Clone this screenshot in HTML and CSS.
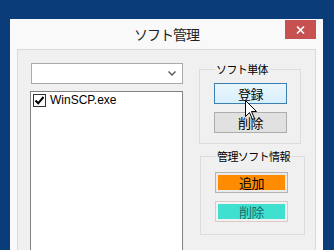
FILE: index.html
```html
<!DOCTYPE html>
<html lang="ja">

<head>
  <meta charset="UTF-8">
  <meta name="viewport" content="width=device-width, initial-scale=1.0">
  <title>ソフト管理</title>
  <link rel="stylesheet" href="styles.css">
</head>

<body>
  <div class="window">
    <!-- タイトルバー -->
    <div class="titlebar">
      <span></span>
      <span class="title">ソフト管理</span>
      <span class="close">
        <svg width="9" height="8" viewBox="0 0 9 8">
          <path d="M1 0.5 L8 7.5 M8 0.5 L1 7.5" stroke="#fff" stroke-width="1.6" fill="none" />
        </svg>
      </span>
    </div>

    <div class="client">
      <div class="left">
        <div class="combo">
          <svg width="8" height="5" viewBox="0 0 8 5">
            <path d="M0.5 0.5 L4 4 L7.5 0.5" stroke="#606060" stroke-width="1.5" fill="none" />
          </svg>
        </div>
        <div class="listbox">
          <div class="item">
            <span class="check">
              <svg width="11" height="11" viewBox="0 0 11 11">
                <path d="M1.5 5.5 L4.2 8.3 L9.5 2" stroke="#000" stroke-width="2" fill="none" />
              </svg>
            </span>
            WinSCP.exe
          </div>
        </div>
      </div>

      <div class="right">
        <fieldset class="group">
          <legend>ソフト単体</legend>
          <button class="btn btn-hover">登録</button>
          <button class="btn">削除</button>
        </fieldset>

        <fieldset class="group group-info">
          <legend>管理ソフト情報</legend>
          <button class="btn btn-add">追加</button>
          <button class="btn btn-del">削除</button>
        </fieldset>
      </div>

      <!-- マウスカーソル -->
      <svg class="cursor" width="13" height="21" viewBox="0 0 13 21">
        <path d="M0.5 0.5 L0.5 16.5 L4.5 12.5 L7.5 19.5 L9.5 18.5 L6.5 11.5 L11.5 11.5 Z" fill="#fff" stroke="#000" stroke-width="1" />
      </svg>
    </div>
  </div>
</body>

</html>
```

FILE: styles.css
```css
body {
  margin: 0;
  padding: 19px 0 0 10px;
  background-color: #0b3c7a;
  font-family: "Noto Sans CJK JP", "Liberation Sans", sans-serif;
  height: 250px;
  overflow: hidden;
  box-sizing: border-box;
}

.window {
  width: 313px;
  height: 231px;
  background: #f9f9f9;
  box-sizing: border-box;
  padding: 0 7px;
  display: flex;
  flex-direction: column;
}

.titlebar {
  height: 30px;
  flex: none;
  display: grid;
  grid-template-columns: 1fr auto 1fr;
  align-items: start;
}

.title {
  font-size: 14px;
  letter-spacing: -1px;
  color: #222;
  line-height: 30px;
}

.close {
  justify-self: end;
  margin-top: 1px;
  width: 31px;
  height: 19px;
  background: #c75050;
  display: flex;
  align-items: center;
  justify-content: center;
}

.client {
  position: relative;
  flex: 1;
  background: #f0f0f0;
  border: 1px solid #d9d9d9;
  border-bottom: none;
  display: flex;
  padding: 12px 0 0 12px;
  gap: 16px;
}

.left {
  width: 153px;
  display: flex;
  flex-direction: column;
  gap: 7px;
  padding-top: 1px;
}

.combo {
  height: 19px;
  margin-left: 1px;
  background: #fff;
  border: 1px solid #a9a9a9;
  display: flex;
  align-items: center;
  justify-content: flex-end;
  padding-right: 6px;
}

.listbox {
  flex: 1;
  background: #fff;
  border: 1px solid #828282;
  border-bottom: none;
  padding: 1px 2px;
}

.item {
  display: flex;
  align-items: center;
  gap: 4px;
  font-family: "Liberation Sans", sans-serif;
  font-size: 12px;
  color: #000;
  height: 14px;
}

.check {
  width: 11px;
  height: 11px;
  border: 1px solid #333;
  background: #fff;
  display: flex;
}

.right {
  display: flex;
  flex-direction: column;
  gap: 5px;
}

.group {
  margin: 0;
  width: 102px;
  box-sizing: border-box;
  border: 1px solid #dcdcdc;
  padding: 7px 13px 10px 14px;
  display: flex;
  flex-direction: column;
  gap: 8px;
}

.group legend {
  font-size: 11px;
  letter-spacing: -0.6px;
  line-height: 14px;
  white-space: nowrap;
  padding: 0 1px;
  margin-left: 1px;
  color: #000;
}

.group-info {
  margin-left: 1px;
  width: 103px;
  padding-top: 9px;
  padding-bottom: 12px;
}

.btn {
  width: 73px;
  height: 21px;
  padding: 0;
  font-family: "Noto Sans CJK JP", sans-serif;
  font-size: 13px;
  letter-spacing: -0.5px;
  line-height: 17px;
  color: #000;
  background: #e1e1e1;
  border: 1px solid #adadad;
}

.btn-hover {
  background: linear-gradient(#eaf6fd, #d7effc);
  border-color: #3c7fb1;
}

.btn-add {
  border-color: #b4b4b4;
  padding: 2px;
  background: linear-gradient(#ff8c00, #ff8c00) content-box, #eaeaea;
  line-height: 15px;
}

.btn-del {
  border-color: #dccaca;
  padding: 2px;
  background: linear-gradient(#40e0d0, #40e0d0) content-box, #f2f2f2;
  color: #1f6d6d;
  line-height: 15px;
}

.cursor {
  position: absolute;
  left: 227px;
  top: 50px;
}
```
